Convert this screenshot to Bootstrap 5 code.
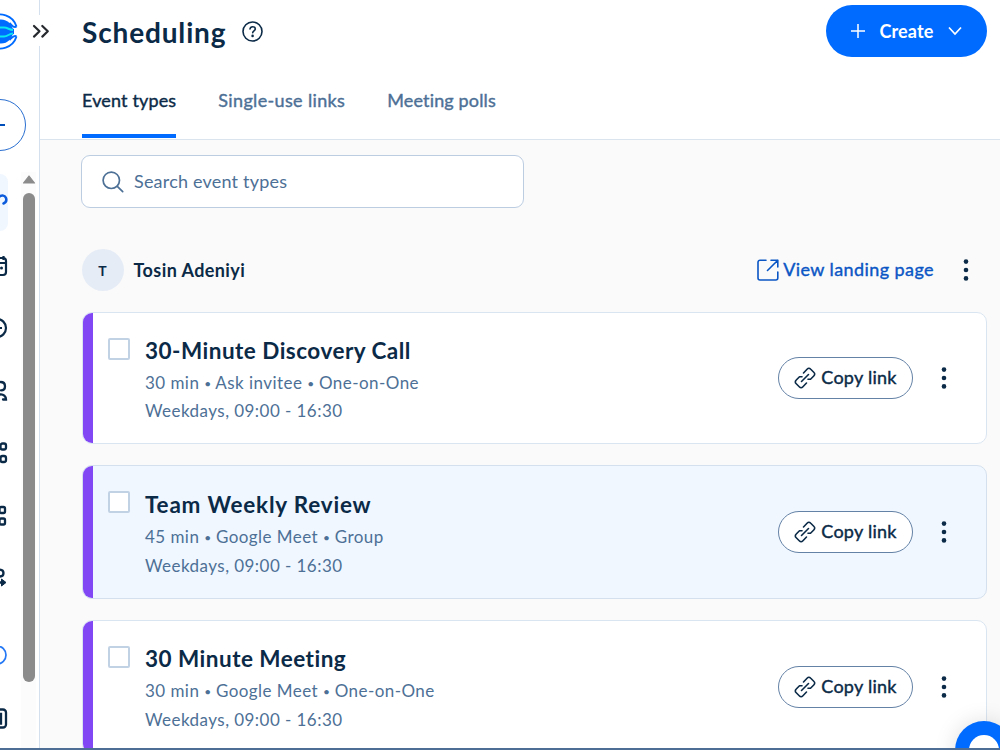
<!DOCTYPE html>
<html lang="en">
<head>
<meta charset="utf-8">
<meta name="viewport" content="width=device-width, initial-scale=1">
<title>Scheduling</title>
<link rel="stylesheet" href="https://cdn.jsdelivr.net/npm/bootstrap@5.3.0/dist/css/bootstrap.min.css">
<style>
:root{--ink:#0b2a47;--muted:#4d7096;--blue:#006bff;--edge:#dae5f2}
body{font-family:Lato,"Liberation Sans",sans-serif;color:var(--ink);background:#fafafa}
svg{display:block;flex:none;fill:none;stroke:currentColor}
.app{height:750px}
/* collapsed navigation rail */
.rail{width:40px;background:#fff;border-right:1px solid #d4e0ed}
.rail-items{width:23px}
.rail-items svg{margin-left:-14px}
.brand{height:62px}
.brand svg{margin-left:-20px}
.collapse-btn{left:30px;top:15px;width:24px;height:31px;background:#fff;z-index:2}
.new-btn{width:56px;height:52px;margin:37px 0 23px -30px;border:1px solid #2a6fd0;border-radius:26px;color:#004eba}
.rail-item{height:62.5px}
.rail-item.current{height:57px;margin-bottom:3.5px;width:8px;background:#f0f7ff;border-radius:0 8px 8px 0;color:#0b5bdc;overflow:hidden}
.ring{color:#2478f5}
.track{top:172px;left:21px;width:15px;height:576px;background:#fcfcfc}
.track svg{color:#8b8b8b;margin:3px 0 9px}
.thumb{width:12px;height:489px;border-radius:6px;background:#8b8b8b}
/* page header */
.top{height:140px;background:#fff;border-bottom:1px solid #d9e4ef;padding:0 13px 0 42px}
.title-row{margin-top:15px;gap:16px}
.page-title{font-size:28px;font-weight:700;letter-spacing:.85px;line-height:34px}
.create{width:161px;height:52px;margin-top:5px;border-radius:26px;background:var(--blue);color:#fff;font-size:18px;font-weight:700;letter-spacing:.15px;gap:14px}
.tabs{gap:42px;height:57px}
.tabs a{color:var(--muted);text-decoration:none;font-size:18px;line-height:36px;height:56px;letter-spacing:.15px;-webkit-text-stroke:.4px currentColor;white-space:nowrap}
.tabs a.active{color:var(--ink);border-bottom:4px solid var(--blue)}
.tabs a.wide{letter-spacing:.35px}
/* event list */
.body-area{padding:15px 13px 0 42px}
.search{width:443px;height:53px;margin-left:-1px;border:1px solid #bccde2;border-radius:9px;background:#fff;color:var(--muted);padding-left:20px;gap:10px;font-size:18px;letter-spacing:.2px}
.owner{margin-top:41px;height:42px}
.avatar{width:42px;height:42px;margin-left:-.5px;background:#e6ecf6;font-size:14px;font-weight:700}
.owner-name{font-size:18px;font-weight:700;letter-spacing:.42px;margin-left:10px}
.landing{color:#0b56c5;font-size:18px;letter-spacing:.42px;-webkit-text-stroke:.4px currentColor;text-decoration:none;gap:4px;padding-bottom:1px}
.dots{width:8px;height:24px;fill:currentColor;stroke:none}
.owner .dots{margin:0 17px 0 28px}
.events{margin-top:21px;gap:21px}
.event{height:132px;border:1px solid var(--edge);border-radius:10px;background:#fff;overflow:hidden}
.event+.event{height:134px}
.event.hovered{background:#f0f7ff;border-color:#d4e0ed}
.stripe{width:11px;margin-left:-1px;background:#8247f5}
.tick{width:22px;height:22px;margin:25px 0 0 15px;border:2px solid #c2d2e5;border-radius:2px;background:#fff}
.info{margin:23px 0 0 15px;color:var(--muted);font-size:17px;line-height:28.4px;letter-spacing:.45px;white-space:nowrap}
.info h2{font-size:22.5px;font-weight:700;line-height:30px;letter-spacing:.48px;margin:0 0 3px;color:var(--ink)}
.hovered .info{margin-top:24px}
.hovered h2{letter-spacing:.8px}
.info i{font-style:normal;font-size:12px;letter-spacing:0;line-height:1;position:relative;top:-1px}
.hours{letter-spacing:.45px}
.event+.event .info{line-height:28.8px}
.copy{width:135px;height:42px;border:1px solid #6482a6;border-radius:21px;gap:5px;font-size:18px;letter-spacing:.25px;-webkit-text-stroke:.4px currentColor;background:#fff;color:var(--ink)}
.copy span{padding-bottom:2px}
.event .dots{margin:0 38px 0 27px}
.chat{width:58px;height:58px;left:955px;top:721px;border-radius:50%;background:var(--blue);box-shadow:0 0 22px rgba(0,0,0,.13)}
.chat span{width:30px;height:30px;border-radius:50%;background:#fff}
.base-line{left:0;top:748px;width:1000px;height:2px;background:#4f6e95}
</style>
</head>
<body>
<div class="app d-flex position-relative overflow-hidden">
  <aside class="rail position-relative flex-shrink-0">
    <div class="rail-items">
      <div class="brand d-flex align-items-center">
        <svg width="40" height="40" viewBox="0 0 40 40"><path d="M36.500 15.500A17 17 0 1 0 36.500 25.500M36.500 15.500C33.500 17.500 32 14 29.500 12M36.500 25.500C33.500 23.500 32 27 29.500 29" stroke="#006bff" stroke-width="1.900"/><circle cx="21" cy="20.500" r="12" fill="#006bff" stroke="none"/><path d="M26 15.500l8 2.500v5l-8 2.500z" fill="#006bff" stroke="none"/><path d="M19 16.500h5c4 0 5 2.500 9 2.500M19 25.500h5c4 0 5-3 9-3" stroke="#0ae8f0" stroke-width="2"/></svg>
      </div>
      <div class="new-btn d-flex align-items-center justify-content-center"><svg class="m-0" width="14" height="14" viewBox="0 0 14 14" stroke-width="1.800"><path d="M1 7h14M5 1v12"/></svg></div>
      <div class="rail-item current d-flex align-items-center"><svg width="22" height="24" viewBox="0 0 22 24" stroke-width="2.500" stroke-linecap="round"><path d="M13 6c3-2.500 6-1.500 7 1 .8 2.500 0 4.500-2.500 5.500"/></svg></div>
      <div class="rail-item d-flex align-items-center"><svg width="22" height="22" viewBox="0 0 22 22" stroke-width="2.200"><rect x="2" y="3" width="18" height="17" rx="3"/><path d="M2 8h18M17.500 1v4M5 1v4"/><circle cx="15.500" cy="13" r="1.500" fill="currentColor" stroke="none"/></svg></div>
      <div class="rail-item d-flex align-items-center"><svg width="22" height="22" viewBox="0 0 22 22" stroke-width="2.200"><circle cx="11" cy="11" r="9"/><path d="M11 5v6h5"/></svg></div>
      <div class="rail-item d-flex align-items-center"><svg width="22" height="22" viewBox="0 0 22 22" stroke-width="2.300" stroke-linecap="round"><path d="M14.500 2c3 0 4.500 1.800 4.500 4.200S17.500 10.300 15 10.300M14 14.500c3.500-.5 6 2 6 5h-3"/></svg></div>
      <div class="rail-item d-flex align-items-center"><svg width="22" height="22" viewBox="0 0 22 22" stroke-width="2.300"><rect x="14.500" y="1.500" width="5.500" height="6" rx="2"/><rect x="14.500" y="14" width="5.500" height="6" rx="2"/></svg></div>
      <div class="rail-item d-flex align-items-center"><svg width="22" height="22" viewBox="0 0 22 22" stroke-width="2.300"><rect x="13.500" y="2" width="5.500" height="6" rx="1.500"/><rect x="13.500" y="13.500" width="5.500" height="6" rx="1.500"/></svg></div>
      <div class="rail-item d-flex align-items-center"><svg width="22" height="22" viewBox="0 0 22 22" stroke-width="2.300"><path d="M13 2.500c3.500 0 4.500 1.500 4.500 3.500S16.500 9.500 14 9.500M12 15.500h6"/><path d="M15.500 12l4.500 3.500-4.500 3.500z" fill="currentColor" stroke-width="1"/></svg></div>
      <div class="rail-item ring d-flex align-items-center mt-3"><svg width="22" height="22" viewBox="0 0 22 22" stroke-width="1.700"><circle cx="11" cy="9" r="9"/></svg></div>
      <div class="rail-item d-flex align-items-center"><svg width="22" height="22" viewBox="0 0 22 22" stroke-width="2.300"><rect x="2" y="1.500" width="18" height="18" rx="3"/><path d="M10 6h5v9.500h-5"/></svg></div>
    </div>
    <div class="track position-absolute d-flex flex-column align-items-center">
      <svg width="14" height="9" viewBox="0 0 14 9"><path d="M7 1l5.500 7h-11z" fill="currentColor" stroke-linejoin="round" stroke-width="1.200"/></svg>
      <div class="thumb"></div>
    </div>
    <div class="collapse-btn position-absolute d-flex align-items-center"><svg width="22" height="18" viewBox="0 0 22 18" stroke-width="2.200" stroke-linecap="round" stroke-linejoin="round"><path stroke="#26292e" d="M4 4l5.500 5.300L4 14.600M12.300 4l5.500 5.300-5.500 5.300"/></svg></div>
  </aside>

  <main class="flex-grow-1">
    <header class="top d-flex flex-column justify-content-between">
      <div class="d-flex justify-content-between align-items-start">
        <div class="title-row d-flex align-items-center">
          <h1 class="page-title mb-0">Scheduling</h1>
          <svg width="22" height="22" viewBox="0 0 22 22" stroke-width="1.600"><circle cx="10.500" cy="10.500" r="9.500"/><path d="M8 8C8.200 6.500 9.200 5.700 10.700 5.700c1.600 0 2.600.9 2.600 2.200 0 1.900-2.600 2-2.600 3.800" stroke-linecap="round"/><circle cx="10.600" cy="14.900" r="1.300" fill="currentColor" stroke="none"/></svg>
        </div>
        <button class="create btn p-0 border-0 d-flex align-items-center justify-content-center">
          <svg width="14" height="14" viewBox="0 0 14 14" stroke-width="1.500"><path d="M0 7h14M7 0v14"/></svg>
          <span>Create</span>
          <svg width="14" height="10" viewBox="0 0 14 10" stroke-width="1.700"><path d="M1 1.500l6 6.500 6-6.500"/></svg>
        </button>
      </div>
      <nav class="tabs d-flex"><a class="active" href="#">Event types</a><a class="wide" href="#">Single-use links</a><a href="#">Meeting polls</a></nav>
    </header>

    <section class="body-area">
      <div class="search d-flex align-items-center">
        <svg width="22" height="22" viewBox="0 0 22 22" stroke-width="1.700" stroke-linecap="round"><circle cx="9.300" cy="9.300" r="8.200"/><path d="M15.300 15.300l5.400 5.400"/></svg><span>Search event types</span>
      </div>
      <div class="owner d-flex align-items-center">
        <div class="avatar rounded-circle d-flex align-items-center justify-content-center">T</div>
        <span class="owner-name">Tosin Adeniyi</span>
        <a class="landing d-flex align-items-center ms-auto" href="#"><svg width="22" height="22" viewBox="0 0 22 22" stroke-width="1.600" stroke-linecap="round" stroke-linejoin="round"><path d="M9 1.200H3a2 2 0 0 0-2 2V19a2 2 0 0 0 2 2h15.800a2 2 0 0 0 2-2v-6M10.500 11.500L20.800 1.200M14 1.200h6.800V8"/></svg><span>View landing page</span></a>
        <svg class="dots" viewBox="0 0 8 24"><circle cx="4" cy="3.600" r="2.300"/><circle cx="4" cy="12" r="2.300"/><circle cx="4" cy="20.400" r="2.300"/></svg>
      </div>

      <div class="events d-flex flex-column">
        <article class="event d-flex">
          <div class="stripe"></div><div class="tick"></div>
          <div class="info"><h2>30-Minute Discovery Call</h2><div>30 min <i>•</i> Ask invitee <i>•</i> One-on-One</div><div class="hours">Weekdays, 09:00 - 16:30</div></div>
          <div class="ms-auto d-flex align-items-center">
            <button class="copy p-0 d-flex align-items-center justify-content-center"><svg width="22" height="22" viewBox="0 0 22 22" stroke-width="1.600" stroke-linecap="round" stroke-linejoin="round"><path id="chain" d="M7.500 14.500l7-7M9.500 6l3.800-4a2.200 2.200 0 0 1 3.200 0l3.500 3.500a2.200 2.200 0 0 1 0 3.200l-3.500 3.500h-2.500M12.500 16l-3.800 4a2.200 2.200 0 0 1-3.200 0l-3.500-3.500a2.200 2.200 0 0 1 0-3.200l3.500-3.500h2.500"/></svg><span>Copy link</span></button>
            <svg class="dots" viewBox="0 0 8 24"><circle cx="4" cy="3.600" r="2.300"/><circle cx="4" cy="12" r="2.300"/><circle cx="4" cy="20.400" r="2.300"/></svg>
          </div>
        </article>
        <article class="event hovered d-flex">
          <div class="stripe"></div><div class="tick"></div>
          <div class="info"><h2>Team Weekly Review</h2><div>45 min <i>•</i> Google Meet <i>•</i> Group</div><div class="hours">Weekdays, 09:00 - 16:30</div></div>
          <div class="ms-auto d-flex align-items-center">
            <button class="copy p-0 d-flex align-items-center justify-content-center"><svg width="22" height="22" viewBox="0 0 22 22" stroke-width="1.600" stroke-linecap="round" stroke-linejoin="round"><use href="#chain"/></svg><span>Copy link</span></button>
            <svg class="dots" viewBox="0 0 8 24"><circle cx="4" cy="3.600" r="2.300"/><circle cx="4" cy="12" r="2.300"/><circle cx="4" cy="20.400" r="2.300"/></svg>
          </div>
        </article>
        <article class="event d-flex">
          <div class="stripe"></div><div class="tick"></div>
          <div class="info"><h2>30 Minute Meeting</h2><div>30 min <i>•</i> Google Meet <i>•</i> One-on-One</div><div class="hours">Weekdays, 09:00 - 16:30</div></div>
          <div class="ms-auto d-flex align-items-center">
            <button class="copy p-0 d-flex align-items-center justify-content-center"><svg width="22" height="22" viewBox="0 0 22 22" stroke-width="1.600" stroke-linecap="round" stroke-linejoin="round"><use href="#chain"/></svg><span>Copy link</span></button>
            <svg class="dots" viewBox="0 0 8 24"><circle cx="4" cy="3.600" r="2.300"/><circle cx="4" cy="12" r="2.300"/><circle cx="4" cy="20.400" r="2.300"/></svg>
          </div>
        </article>
      </div>
    </section>
  </main>
  <div class="chat position-absolute d-flex align-items-center justify-content-center"><span></span></div>
  <div class="base-line position-absolute"></div>
</div>
<script src="https://cdn.jsdelivr.net/npm/bootstrap@5.3.0/dist/js/bootstrap.bundle.min.js"></script>
</body>
</html>
